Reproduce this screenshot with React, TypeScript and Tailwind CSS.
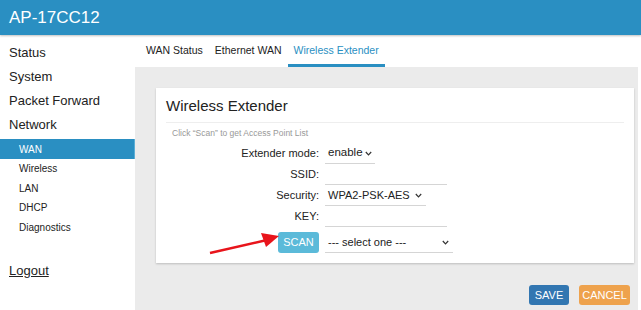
import React from "react";

const Chevron = () => (
  <svg width="7" height="5" viewBox="0 0 7 5" className="shrink-0">
    <polyline points="0.8,1 3.5,3.8 6.2,1" fill="none" stroke="#333" strokeWidth="1.2" />
  </svg>
);

const sideMain = ["Status", "System", "Packet Forward", "Network"];
const sideSub = ["WAN", "Wireless", "LAN", "DHCP", "Diagnostics"];

export default function App() {
  return (
    <div className="relative w-[641px] h-[310px] overflow-hidden bg-white flex flex-col font-['Liberation_Sans',Arial,sans-serif] text-[#222]">
      {/* Header */}
      <div className="h-[35px] shrink-0 bg-[#2a8fc2] shadow-[0_1px_2px_rgba(0,0,0,0.25)] z-10 flex items-center pl-[9px]">
        <span className="text-white text-[17px]">AP-17CC12</span>
      </div>

      <div className="flex flex-1 min-h-0">
        {/* Sidebar */}
        <div className="w-[135px] shrink-0 flex flex-col pt-[6px]">
          {sideMain.map((s) => (
            <div key={s} className="h-[24px] flex items-center pl-[9px] text-[13px]">
              {s}
            </div>
          ))}
          <div className="h-[2px]" />
          {sideSub.map((s, i) => (
            <div
              key={s}
              className={
                i === 0
                  ? "h-[20px] flex items-center pl-[19px] text-[10px] bg-[#2a8fc2] text-white border-r border-[#5aaed6]"
                  : "h-[19.5px] flex items-center pl-[19px] text-[10px]"
              }
            >
              {s}
            </div>
          ))}
          <div className="mt-[24px] pl-[9px] text-[13px] underline">Logout</div>
        </div>

        {/* Main */}
        <div className="flex-1 flex flex-col">
          <div className="h-[32px] shrink-0 flex items-stretch pl-[5px] text-[10.5px]">
            <div className="px-[6px] flex items-center">WAN Status</div>
            <div className="px-[6px] flex items-center">Ethernet WAN</div>
            <div className="px-[6px] flex items-center text-[#2a8fc2] border-b-[3px] border-[#2a8fc2] pt-[3px]">
              Wireless Extender
            </div>
          </div>

          <div className="flex-1 bg-[#ebebeb] mr-[3px] pt-[21px] pl-[21px] pr-[4px] flex flex-col">
            <div className="h-[175px] bg-white shadow-[0_1px_2px_rgba(0,0,0,0.2)] px-[10px] pt-[7px]">
              <div className="text-[15px] h-[22px] flex items-center">Wireless Extender</div>
              <div className="mt-[5px] border-b border-[#eeeeee]" />
              <div className="pl-[6px] mt-[4px] text-[8.5px] text-[#999] h-[12px] flex items-center">
                Click “Scan” to get Access Point List
              </div>
              <div className="mt-[4px] grid grid-cols-[153px_1fr] gap-x-[6px] text-[11px] whitespace-nowrap">
                <div className="h-[21px] flex items-center justify-end">Extender mode:</div>
                <div className="h-[21px]">
                  <div className="w-[50px] h-full border-b border-[#d5d5d5] flex items-center justify-between pl-[3px] pr-[3px] text-[11.5px]">
                    <span>enable</span>
                    <Chevron />
                  </div>
                </div>

                <div className="h-[21px] flex items-center justify-end">SSID:</div>
                <div className="h-[21px]">
                  <div className="w-[122px] h-full border-b border-[#d5d5d5]" />
                </div>

                <div className="h-[21px] flex items-center justify-end">Security:</div>
                <div className="h-[21px]">
                  <div className="w-[101px] h-full border-b border-[#d5d5d5] flex items-center justify-between pl-[3px] pr-[4px] text-[11px]">
                    <span>WPA2-PSK-AES</span>
                    <Chevron />
                  </div>
                </div>

                <div className="h-[21px] flex items-center justify-end">KEY:</div>
                <div className="h-[21px]">
                  <div className="w-[122px] h-full border-b border-[#d5d5d5]" />
                </div>

                <div className="h-[21px] mt-[5px] flex items-center justify-end">
                  <button className="w-[41px] h-[21px] rounded-[3px] bg-[#5bbad9] text-white text-[11px]">SCAN</button>
                </div>
                <div className="h-[21px] mt-[5px]">
                  <div className="w-[128px] h-full border-b border-[#d5d5d5] flex items-center justify-between pl-[3px] pr-[4px] text-[11px]">
                    <span>--- select one ---</span>
                    <Chevron />
                  </div>
                </div>
              </div>
            </div>

            <div className="mt-[22px] flex justify-end gap-[10px] pr-[4px]">
              <button className="w-[40px] h-[20px] rounded-[3px] bg-[#3276b1] text-white text-[11px]">SAVE</button>
              <button className="w-[51px] h-[20px] rounded-[3px] bg-[#eea24d] text-white text-[11px]">CANCEL</button>
            </div>
          </div>
        </div>
      </div>

      {/* Red annotation arrow */}
      <svg className="absolute left-[205px] top-[228px] pointer-events-none" width="80" height="30" viewBox="0 0 80 30">
        <line x1="5" y1="25" x2="62" y2="12" stroke="#e8141b" strokeWidth="2.5" />
        <polygon points="74,8 56,5 61,19" fill="#e8141b" />
      </svg>
    </div>
  );
}
